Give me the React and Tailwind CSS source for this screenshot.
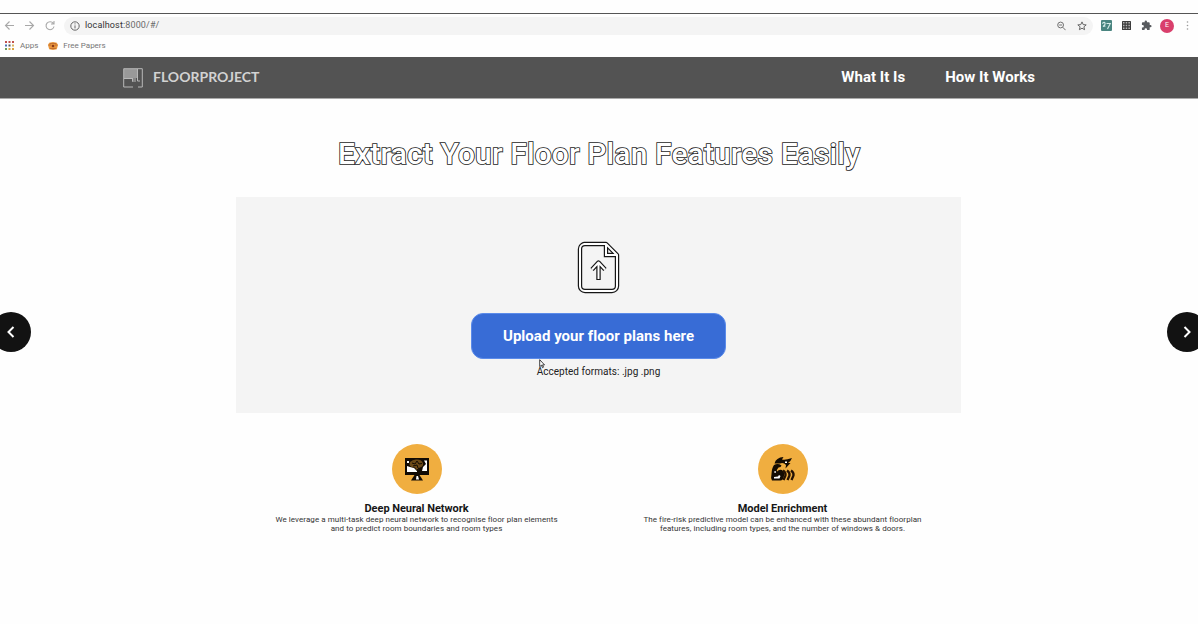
import React from "react";

const APP_COLORS = ["#c0504d", "#c0504d", "#c0504d", "#4a6fb5", "#555555", "#d9b25f", "#6c9b5c", "#d9a441", "#d9a441"];

function BrowserBar() {
  return (
    <div className="h-[57px] shrink-0 pt-[13px]">
      <div className="flex h-[24px] items-center border-t border-[#555] text-[#5f6368]">
        <svg className="ml-[4px] h-[11px] w-[52px] shrink-0" viewBox="0 0 52 11" fill="none" stroke="#a8a8a8" strokeWidth="1.1">
          <path d="M10 5.5H1.5M5.5 1.5l-4 4 4 4" />
          <path d="M21 5.5h8.500M25.500 1.500l4 4-4 4" />
          <path d="M49.300 3.300A4 4 0 1 0 50 6.500M50 1v3h-3" />
        </svg>
        <div className="ml-[8px] flex h-[18px] w-[1029px] shrink-0 items-center rounded-full bg-[#f4f4f4] pl-[6px] pr-[6px]">
          <svg className="h-[10px] w-[10px]" viewBox="0 0 10 10" fill="none" stroke="#666" strokeWidth="1">
            <circle cx="5" cy="5" r="4.200" />
            <path d="M5 4.400v3M5 2.400v1" />
          </svg>
          <span className="ml-[5px] text-[9px] tracking-[0.13px] text-[#333]">localhost:<span className="text-[#6a6a6a]">8000/#/</span></span>
          <svg className="ml-auto h-[10px] w-[9px]" viewBox="0 0 9 10" fill="none" stroke="#707070" strokeWidth="1">
            <circle cx="3.600" cy="4" r="2.900" />
            <path d="M5.700 6.200l2.900 3M2.200 4h2.800" />
          </svg>
          <svg className="ml-[11px] h-[10px] w-[10px]" viewBox="0 0 10 10" fill="none" stroke="#666" strokeWidth="1">
            <path d="M5 .9l1.200 2.700 3 .3-2.300 1.900.7 2.900L5 7.200 2.400 8.700l.7-2.900L.8 3.900l3-.3z" />
          </svg>
        </div>
        <svg className="ml-[8px] h-[11px] w-[11px] shrink-0" viewBox="0 0 11 11">
          <rect width="11" height="11" rx="1" fill="#4a8580" />
          <path d="M1.300 3.500q2-2 2.700-.5T2 6.500l2.500-.5M5.500 3.500h3.800L6.500 9" fill="none" stroke="#d5ece8" strokeWidth="1.100" />
        </svg>
        <svg className="ml-[10px] h-[9px] w-[9px] shrink-0" viewBox="0 0 9 9">
          <rect width="9" height="9" rx=".6" fill="#3c3c3c" />
          <path d="M1 1h1.500v1.500H1zM3.700 1h1.500v1.500H3.700zM6.400 1h1.500v1.500H6.400zM1 3.700h1.500v1.500H1zM3.700 3.700h1.500v1.500H3.700zM6.400 3.700h1.500v1.500H6.400zM1 6.400h1.500v1.500H1zM3.700 6.400h1.500v1.500H3.700zM6.400 6.400h1.500v1.500H6.400z" fill="#b5b5b5" />
        </svg>
        <svg className="ml-[10px] h-[11px] w-[11px] shrink-0" viewBox="0 0 24 24" fill="#575a5e">
          <path d="M20.500 11H19V7a2 2 0 0 0-2-2h-4V3.500a2.500 2.500 0 0 0-5 0V5H4a2 2 0 0 0-2 2v3.800h1.500a2.700 2.700 0 0 1 0 5.400H2V20a2 2 0 0 0 2 2h3.800v-1.500a2.700 2.700 0 0 1 5.400 0V22H17a2 2 0 0 0 2-2v-4h1.500a2.500 2.500 0 0 0 0-5z" />
        </svg>
        <div className="ml-[8px] flex h-[14px] w-[14px] shrink-0 items-center justify-center rounded-full bg-[#d93f6c] text-[7px] text-white">E</div>
        <svg className="ml-[12px] h-[9px] w-[3px] shrink-0" viewBox="0 0 3 9" fill="#999">
          <circle cx="1.500" cy="1" r=".8" /><circle cx="1.500" cy="4.500" r=".8" /><circle cx="1.500" cy="8" r=".8" />
        </svg>
      </div>
      <div className="flex h-[17px] items-center pl-[5px] text-[8px] text-[#777]">
        <svg className="h-[9px] w-[9px]" viewBox="0 0 9 9">
          {APP_COLORS.map((c, i) => (
            <rect key={i} x={(i % 3) * 3.5} y={Math.floor(i / 3) * 3.5} width="2" height="2" fill={c} />
          ))}
        </svg>
        <span className="ml-[6px]">Apps</span>
        <svg className="ml-[10px] h-[8px] w-[10px]" viewBox="0 0 10 8">
          <path d="M1.200.8L5 0l3.800.8L10 3 8.800 7.200 5 8 1.200 7.200 0 3z" fill="#e9963c" />
          <path d="M.5 3h2.500M7 3h2.500M2 6.500h6M2 1.500h6" stroke="#b5602a" strokeWidth=".7" />
          <circle cx="5" cy="4" r="1.300" fill="#8b3a1a" />
        </svg>
        <span className="ml-[5px]">Free Papers</span>
      </div>
    </div>
  );
}

function Nav() {
  return (
    <header className="flex h-[42px] shrink-0 items-center border-b border-[#aaa] bg-[#535353] pl-[123px] pr-[163px]">
      <svg className="h-[20px] w-[20px]" viewBox="0 0 20 20">
        <path d="M1 1h13v9H1z" fill="#999" />
        <path d="M9 10h4v4H9z" fill="#858585" />
        <path d="M10 19H.7V.7h18.600V19H15M14.500 1v12H17M1 10.500h8M9.500 10v3.500" fill="none" stroke="#b8b8b8" strokeWidth="1" />
      </svg>
      <span className="ml-[10px] -translate-y-px font-[Lato,sans-serif] text-[14px] font-bold tracking-[0.01px] text-[#d2d2d2]">FLOORPROJECT</span>
      <nav className="ml-auto flex gap-[40px] text-[15px] font-bold tracking-[0.02px] text-white">
        <a>What It Is</a>
        <a>How It Works</a>
      </nav>
    </header>
  );
}

function UploadPanel() {
  return (
    <section className="ml-[236px] mt-[24px] flex h-[216px] w-[725px] flex-col items-center bg-[#f4f4f4] pt-[44px]">
      <svg className="h-[53px] w-[43px]" viewBox="0 0 43 53" fill="none" strokeLinejoin="round">
        <g stroke="#161616" strokeWidth="4.400">
          <path d="M7 3h22l11 11v31a5 5 0 0 1-5 5H8a5 5 0 0 1-5-5V8a5 5 0 0 1 5-5z" />
          <path d="M29 3v11h11" strokeLinejoin="miter" />
          <path d="M21.500 39V23M15 28.500l6.500-7 6.500 7" />
        </g>
        <g stroke="#fff" strokeWidth="2">
          <path d="M7 3h22l11 11v31a5 5 0 0 1-5 5H8a5 5 0 0 1-5-5V8a5 5 0 0 1 5-5z" />
          <path d="M29 3v11h11" strokeLinejoin="miter" />
          <path d="M21.500 38V23M15 28.500l6.500-7 6.500 7" />
        </g>
      </svg>
      <button className="mt-[19px] flex h-[46px] w-[255px] shrink-0 items-center justify-center whitespace-nowrap rounded-[12px] border border-[#5b8bea] bg-[#386cd6] text-[15px] font-bold tracking-[0.03px] text-white">
        Upload your floor plans here
      </button>
      <div className="relative mt-[5px] text-[10px] leading-[16px] tracking-[0.03px] text-[#222]">
        Accepted formats: .jpg .png
        <svg className="absolute left-[2px] top-[-5px] h-[10px] w-[6px]" viewBox="0 0 6 10">
          <path d="M.7.700v7l1.700-1.500 1.100 2.500 1-.5-1-2.300h2z" fill="#fff" stroke="#111" strokeWidth=".8" />
        </svg>
      </div>
    </section>
  );
}

function BrainScreen() {
  return (
    <svg className="h-[24px] w-[26px]" viewBox="0 0 26 24">
      <path d="M1 1h24v17H1z" fill="#120b04" />
      <path d="M3 9l3 1 4 1 3 3v1H3zM20 3.500h3v10.500h-5l1-4 3-3z" fill="#fff" />
      <path d="M3 4h2v2H3z" fill="#fff" />
      <path d="M6 5q3-3 7-2.500 5 0 6 4 .5 3-3 4l-3 3-2-3q-5 0-5.500-3z" fill="#6b4917" />
      <path d="M8 6l3 1 2-3 2 3 3-.5M9 9l4-1 1 3M13 13l2-2 3 2-3 3z" stroke="#160d03" fill="none" />
      <path d="M10.500 18h5l3.500 5.500H7z" fill="#120b04" />
      <path d="M12.500 19h1.500l1 3.500h-3z" fill="#fff" />
    </svg>
  );
}

function ArmFlame() {
  return (
    <svg className="h-[25px] w-[26px]" viewBox="0 0 26 25">
      <path d="M4.500 7.500q1.500-6 9-6.500l-1.500 2.500q3 1 10-1.500-1 3-4 5h2.500l-5 5.500.5-3.500q-2.500-3-6-1.500Z" fill="#140b02" />
      <path d="M4 9q4-2 7.500.5-.5 2-3 2-2 2-1.500 4 2-2.500 5-1.500 3 2 2 6-1 4.500-3.500 4.500H2Q.5 22 1.500 18 1.800 12 4 9Z" fill="#140b02" />
      <path d="M13 14.500q3 2 2.500 5l-2 4.500M17 14.500q3 2 2.500 5l-2 4.500M21 14.500q3 2 2.500 5l-2 4.500" stroke="#241103" strokeWidth="2.300" fill="none" />
      <path d="M4 21l4-.5 1-1.500 1.500 1-1 2.500H4zM4.500 15h1.200v2H4.500zM15 5.500h2V7h-2z" fill="#fff" />
    </svg>
  );
}

function Feature({ icon, title, lines }) {
  return (
    <div className="flex w-[366px] flex-col items-center whitespace-nowrap">
      <div className="flex h-[50px] w-[50px] items-center justify-center rounded-full bg-[#f0ae40]">{icon}</div>
      <h2 className="mt-[9px] text-[11px] font-bold leading-[12px] tracking-[-0.04px] text-[#171717]">{title}</h2>
      {lines.map((l) => (
        <p key={l} className="text-[8px] leading-[9.500px] tracking-[0.065px] text-[#333]">{l}</p>
      ))}
    </div>
  );
}

function CarouselButtons() {
  return (
    <>
      <button className="absolute left-[-9px] top-[312px] flex h-[40px] w-[40px] items-center justify-center rounded-full bg-[#121212]">
        <svg className="h-[12px] w-[8px]" viewBox="0 0 8 12" fill="none" stroke="#fff" strokeWidth="2"><path d="M6.500 1L1.500 6l5 5" /></svg>
      </button>
      <button className="absolute right-[-9px] top-[312px] flex h-[40px] w-[40px] items-center justify-center rounded-full bg-[#121212]">
        <svg className="h-[12px] w-[8px]" viewBox="0 0 8 12" fill="none" stroke="#fff" strokeWidth="2"><path d="M1.500 1l5 5-5 5" /></svg>
      </button>
    </>
  );
}

export default function App() {
  return (
    <div className="relative flex h-[624px] w-[1198px] flex-col overflow-hidden bg-[#fefefe] font-[Roboto,sans-serif]">
      <BrowserBar />
      <Nav />
      <main className="flex flex-col">
        <h1 className="mt-[34px] h-[40px] whitespace-nowrap text-center text-[30px] font-medium leading-[41px] tracking-[0.130px] text-white [paint-order:stroke_fill] [-webkit-text-stroke:1.7px_#1c1c1c]">
          Extract Your Floor Plan Features Easily
        </h1>
        <UploadPanel />
        <div className="mt-[30.500px] flex justify-center pl-[1px]">
          <Feature
            icon={<BrainScreen />}
            title="Deep Neural Network"
            lines={["We leverage a multi-task deep neural network to recognise floor plan elements", "and to predict room boundaries and room types"]}
          />
          <Feature
            icon={<ArmFlame />}
            title="Model Enrichment"
            lines={["The fire-risk predictive model can be enhanced with these abundant floorplan", "features, including room types, and the number of windows & doors."]}
          />
        </div>
      </main>
      <CarouselButtons />
    </div>
  );
}
